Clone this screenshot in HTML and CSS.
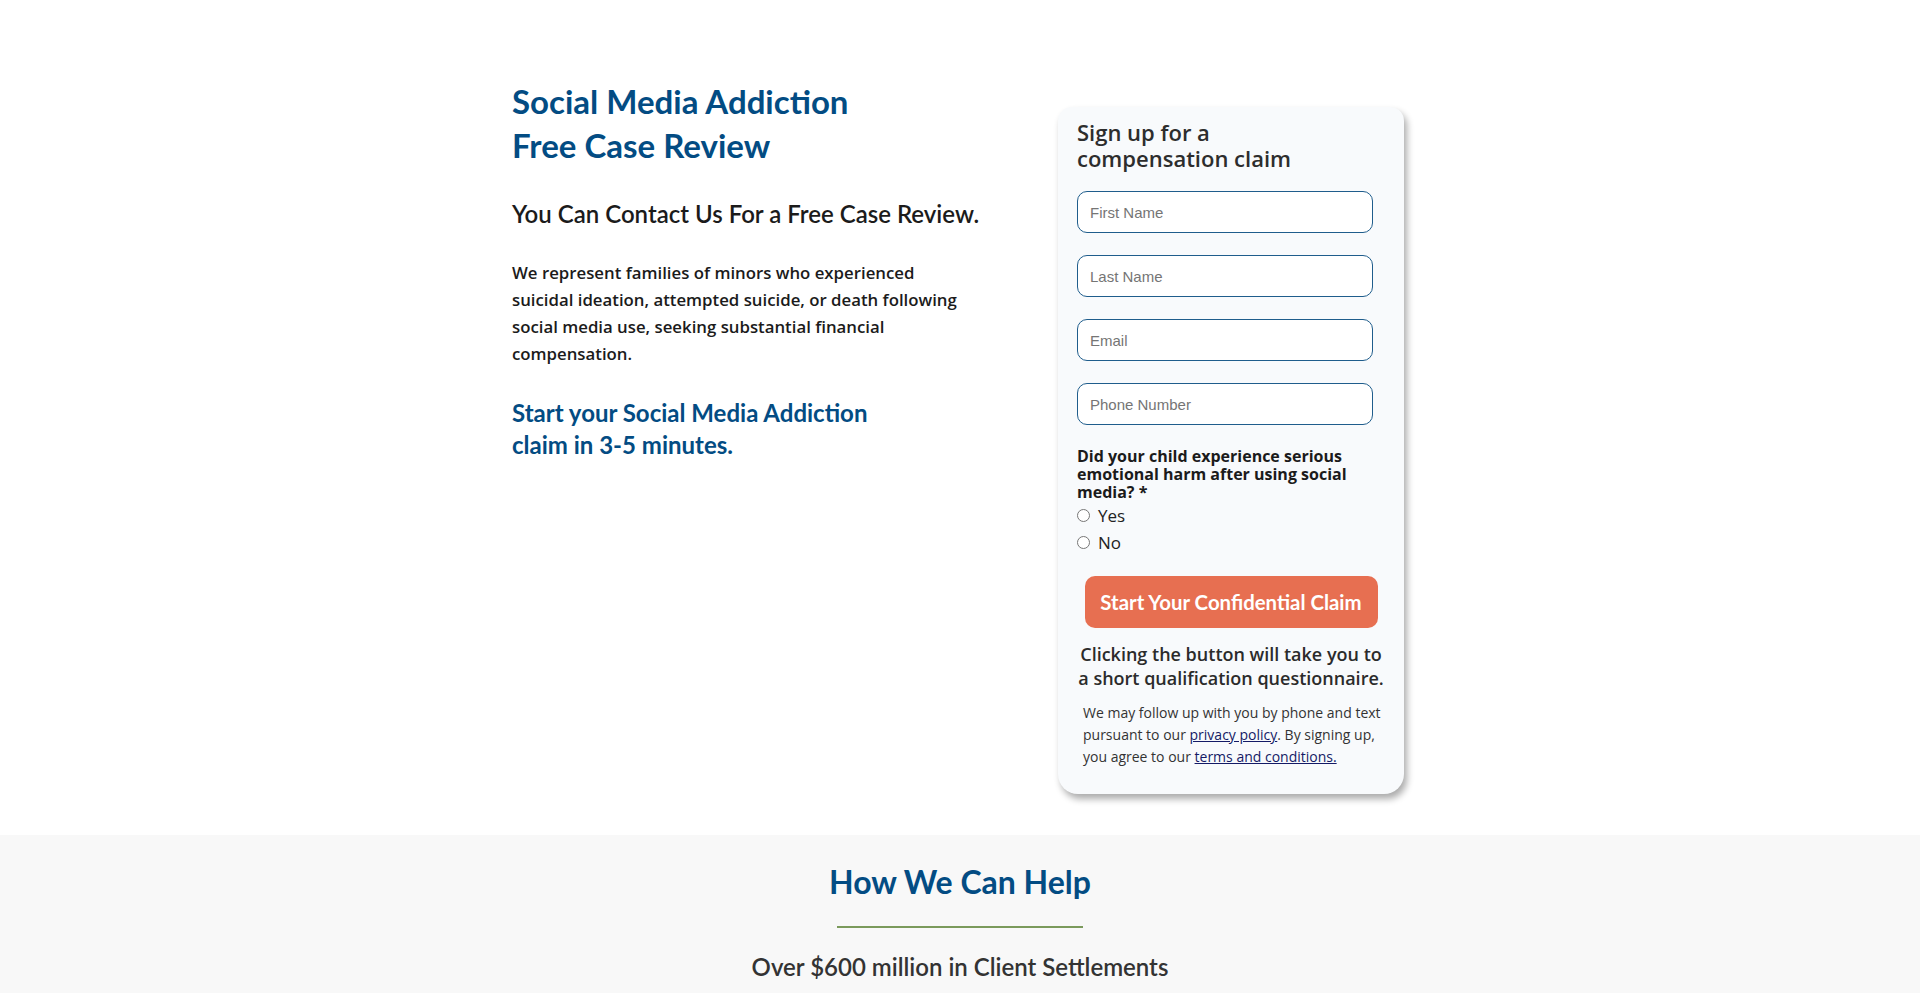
FILE: index.html
```html
<!DOCTYPE html>
<html lang="en">
<head>
<meta charset="utf-8">
<title>Social Media Addiction Free Case Review</title>
<link rel="stylesheet" href="styles.css">
</head>
<body>
<section class="hero">
  <div class="hero-inner">
    <div class="intro">
      <h1 class="intro-title">Social Media Addiction<br>Free Case Review</h1>
      <h2 class="intro-sub">You Can Contact Us For a Free Case Review.</h2>
      <p class="intro-text">We represent families of minors who experienced suicidal ideation, attempted suicide, or death following social media use, seeking substantial financial compensation.</p>
      <h3 class="intro-cta">Start your Social Media Addiction<br>claim in 3-5 minutes.</h3>
    </div>
    <form class="card">
      <h2 class="card-title">Sign up for a<br>compensation claim</h2>
      <input class="field" type="text" placeholder="First Name">
      <input class="field" type="text" placeholder="Last Name">
      <input class="field" type="email" placeholder="Email">
      <input class="field" type="tel" placeholder="Phone Number">
      <p class="question">Did your child experience serious emotional harm after using social media? *</p>
      <label class="radio-row"><input class="radio" type="radio" name="harm"> Yes</label>
      <label class="radio-row"><input class="radio" type="radio" name="harm"> No</label>
      <button class="submit" type="button">Start Your Confidential Claim</button>
      <p class="note">Clicking the button will take you to a short qualification questionnaire.</p>
      <p class="legal">We may follow up with you by phone and text pursuant to our <a href="#">privacy policy</a>. By signing up, you agree to our <a href="#">terms and conditions.</a></p>
    </form>
  </div>
</section>
<section class="help">
  <h2 class="help-title">How We Can Help</h2>
  <div class="help-rule"></div>
  <p class="help-sub">Over $600 million in Client Settlements</p>
</section>
</body>
</html>
```
FILE: styles.css
```css
* { box-sizing: border-box; }
html, body { margin: 0; padding: 0; background: #fff; }
body { font-family: "Open Sans", "Liberation Sans", sans-serif; color: #222; }

.hero { padding: 79px 0 41px; }
.hero-inner {
  width: 892px;
  margin: 0 0 0 512px;
  display: flex;
  justify-content: space-between;
  align-items: flex-start;
}
.intro { width: 480px; }
.intro-title {
  margin: 0;
  font-family: Lato, sans-serif;
  font-weight: 700;
  font-size: 33px;
  line-height: 44px;
  color: #034c83;
}
.intro-sub {
  margin: 32px 0 0;
  font-family: Lato, sans-serif;
  font-weight: 600;
  font-size: 24px;
  line-height: 30px;
  color: #1b1b1b;
}
.intro-text {
  margin: 30px 0 0;
  width: 462px;
  font-size: 16.8px;
  font-weight: 600;
  line-height: 27px;
  color: #1b1b1b;
}
.intro-cta {
  margin: 30px 0 0;
  font-family: Lato, sans-serif;
  font-weight: 700;
  font-size: 24px;
  line-height: 32px;
  color: #034c83;
}

.card {
  margin-top: 28px;
  width: 346px;
  padding: 12px 19px 26px;
  background: #f8fafc;
  border-radius: 14px 14px 20px 20px;
  box-shadow: 3px 5px 7px rgba(0, 0, 0, 0.33);
  display: flex;
  flex-direction: column;
}
.card-title {
  margin: 0 0 20px;
  font-size: 22px;
  font-weight: 600;
  line-height: 26px;
  color: #2d2d2d;
}
.field {
  width: 296px;
  height: 42px;
  margin: 0 0 22px;
  padding: 0 12px;
  border: 1px solid #1f5d8c;
  border-radius: 10px;
  background: #fff;
  font-family: "Liberation Sans", Arial, sans-serif;
  font-size: 15px;
  color: #222;
}
.field::placeholder { color: #757575; }
.question {
  margin: 0 0 1px;
  font-size: 16px;
  font-weight: 700;
  line-height: 18px;
  color: #1b1b1b;
}
.radio-row {
  display: flex;
  align-items: center;
  gap: 8px;
  font-size: 17px;
  line-height: 27px;
  color: #222;
}
.radio { margin: 0; width: 13px; height: 13px; }
.submit {
  align-self: center;
  width: 293px;
  height: 52px;
  margin: 20px 0 0;
  border: 0;
  border-radius: 10px;
  background: #e76f51;
  color: #fff;
  font-family: Lato, sans-serif;
  font-weight: 700;
  font-size: 20.4px;
}
.note {
  margin: 14px 0 0;
  text-align: center;
  font-size: 18px;
  font-weight: 600;
  line-height: 24px;
  color: #2b2b2b;
}
.legal {
  margin: 12px 0 0 6px;
  font-size: 14px;
  line-height: 22px;
  color: #333;
}
.legal a { color: #141a66; }

.help {
  background: #f8f8f8;
  padding: 25px 0 20px;
  text-align: center;
}
.help-title {
  margin: 0;
  font-family: Lato, sans-serif;
  font-weight: 700;
  font-size: 32px;
  line-height: 44px;
  color: #034c83;
}
.help-rule {
  width: 246px;
  height: 2px;
  margin: 22px auto 0;
  background: #7b9a5c;
}
.help-sub {
  margin: 23px 0 0;
  font-family: Lato, sans-serif;
  font-weight: 600;
  font-size: 24px;
  line-height: 32px;
  color: #333;
}
```
